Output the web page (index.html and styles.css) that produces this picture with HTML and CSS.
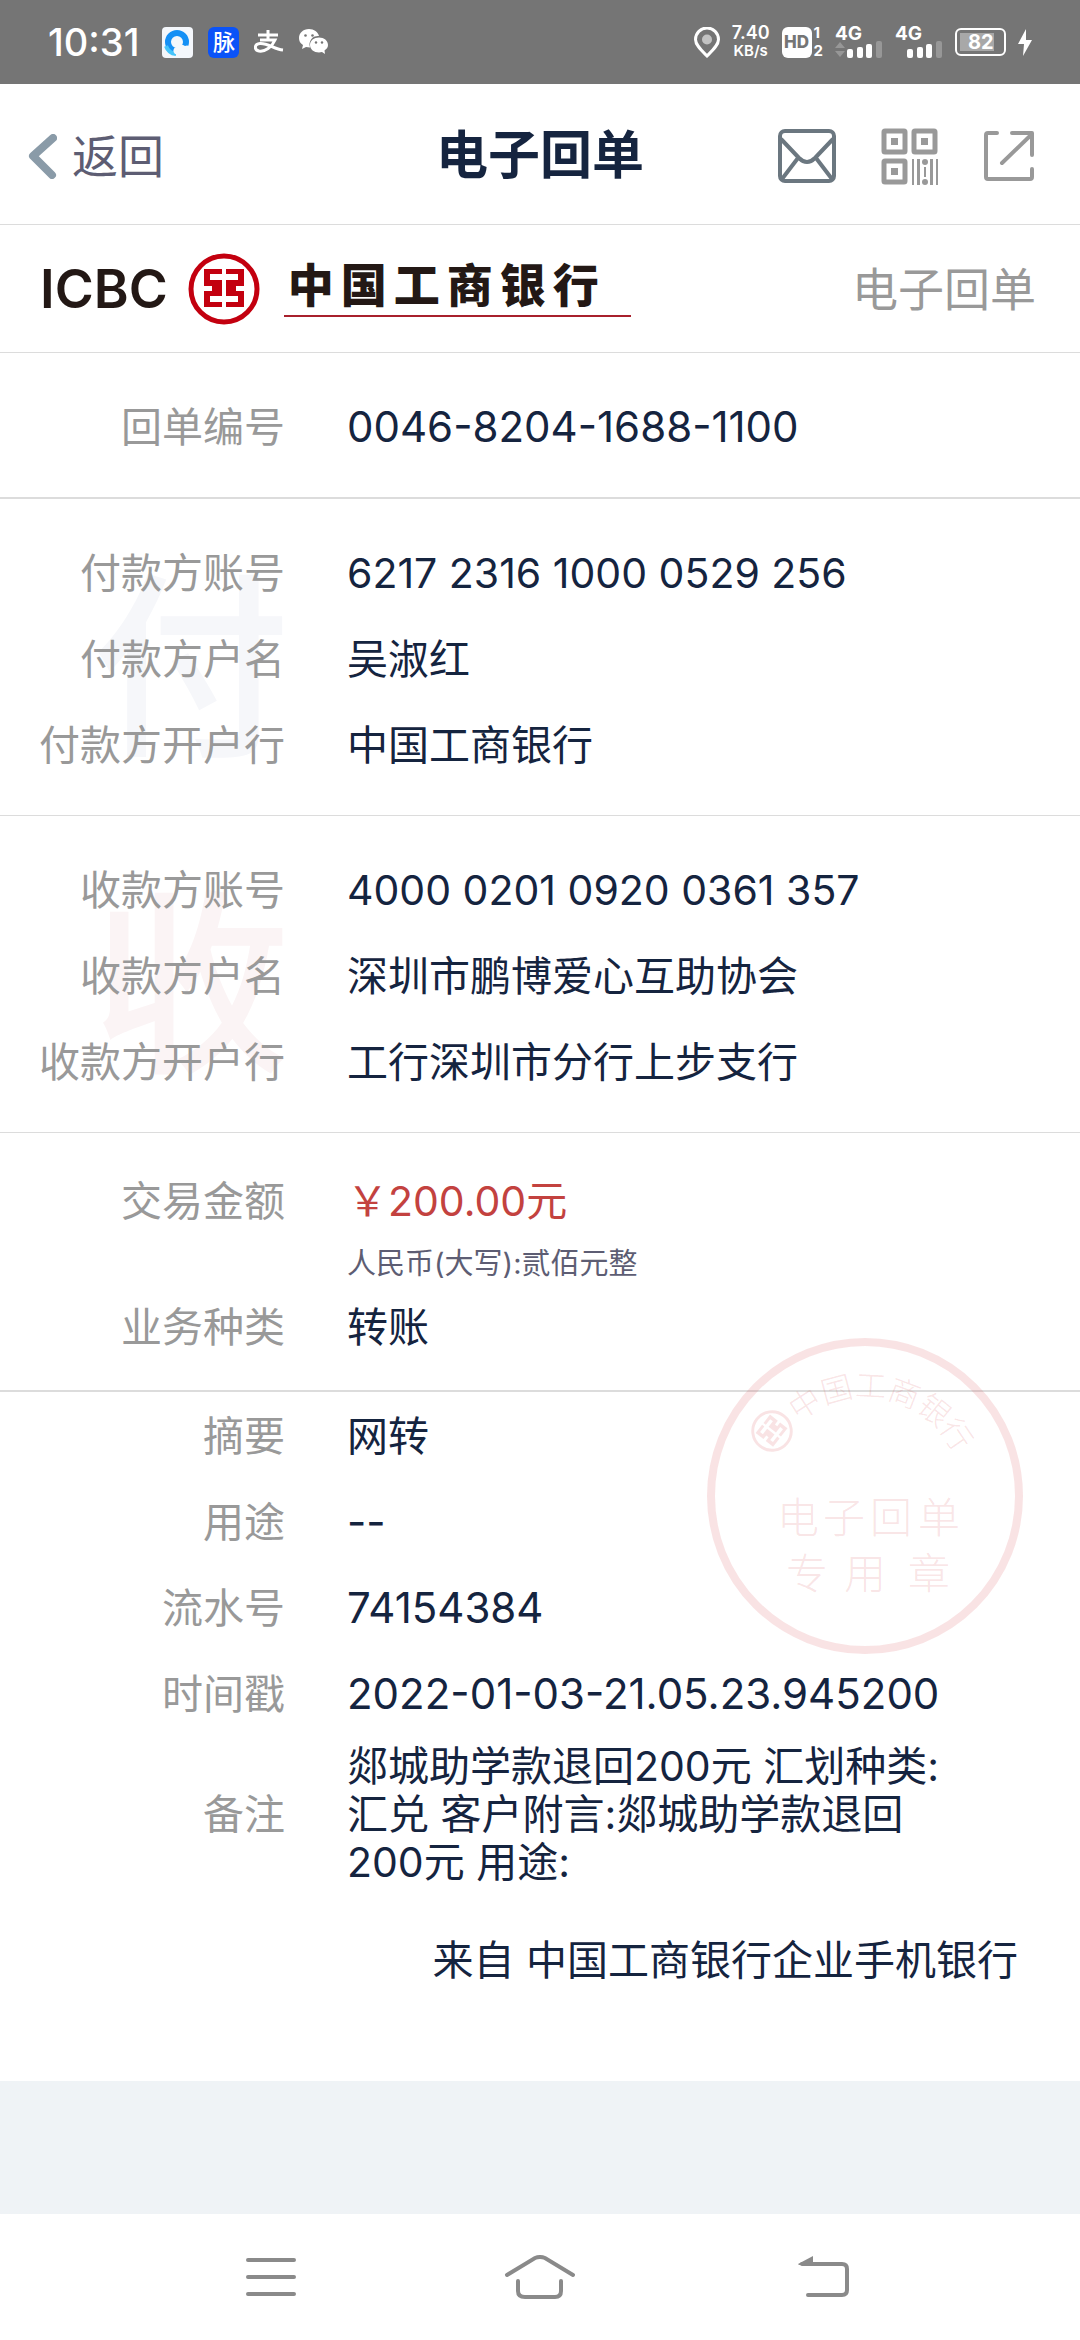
FILE: index.html
```html
<!DOCTYPE html>
<html lang="zh-CN">
<head>
<meta charset="utf-8">
<meta name="viewport" content="width=device-width, initial-scale=1">
<title>电子回单</title>
<link rel="stylesheet" href="styles.css">
</head>
<body>
<svg class="defs" aria-hidden="true">
  <symbol id="emblem" viewBox="0 0 72 72">
    <circle cx="36" cy="36" r="33" fill="none" stroke="currentColor" stroke-width="5"/>
    <path fill="currentColor" d="M16 16H34V21H22V27H34V43H22V49H34V54H16V38H24V33H16ZM56 16H38V21H50V27H38V43H50V49H38V54H56V38H48V33H56Z"/>
  </symbol>
</svg>

<div class="statusbar">
  <div class="status-left">
    <span class="clock">10:31</span>
    <svg width="31" height="31" viewBox="0 0 31 31"><rect width="31" height="31" rx="4" fill="#f4f7fb"/><circle cx="15" cy="15" r="9" fill="none" stroke="#1590f5" stroke-width="6"/><path d="M4 19a12 12 0 0 0 10 8" fill="none" stroke="#45c4fa" stroke-width="4"/><path d="M13 27a4 4 0 0 1 1-7 6 6 0 0 1 9-1 4 4 0 0 1 4 8Z" fill="#f4f7fb"/></svg>
    <span class="mai">脉</span>
    <svg width="30" height="24" viewBox="0 0 30 24" fill="none" stroke="#fff" stroke-width="3"><path d="M4 5H24M14 0V10M6 10H21C18 17 11 22 5 21C0 20 0 14 6 13.500C14 13 20 19 29 20"/></svg>
    <svg width="29" height="26" viewBox="0 0 29 26"><path fill="#fff" d="M10 0C4 0 0 4 0 9c0 3 1 5 4 7l-1 4 4-2 4 .5A8.500 8.500 0 0 1 20 7C19 3 15 0 10 0Z"/><path fill="#fff" d="M20 8.500c-5 0-9 3-9 7.500s4 7.500 9 7.500l3-.5 3 2-.5-3.500c2-1.500 3.500-3 3.500-5.500 0-4.500-4-7.500-9-7.500Z"/><g fill="#757575"><circle cx="6.500" cy="6.500" r="1.300"/><circle cx="13.500" cy="6.500" r="1.300"/><circle cx="17" cy="13.500" r="1.200"/><circle cx="23" cy="13.500" r="1.200"/></g></svg>
  </div>
  <div class="status-right">
    <svg width="26" height="31" viewBox="0 0 26 31"><path d="M13 29C7 23 1.500 18 1.500 12.500a11.500 11.500 0 0 1 23 0C24.500 18 19 23 13 29Z" fill="none" stroke="#fff" stroke-width="3"/><circle cx="13" cy="12.500" r="5" fill="#c3c3c3"/></svg>
    <span class="speed"><span class="speed-value">7.40</span><span class="speed-unit">KB/s</span></span>
    <span class="hd"><span class="hd-box">HD</span><span class="hd-sims"><span>1</span><span>2</span></span></span>
    <span class="signal"><span class="net">4G</span><svg width="48" height="17" viewBox="0 0 48 17"><g fill="#979797"><path d="M0 7 5 1l5 6ZM0 10l5 6 5-6Z"/><rect x="41" width="6" height="17" rx="2"/></g><g fill="#fff"><rect x="12" y="8" width="6" height="9" rx="2"/><rect x="22" y="6" width="6" height="11" rx="2"/><rect x="31" y="3" width="6" height="14" rx="2"/></g></svg></span>
    <span class="signal"><span class="net">4G</span><svg width="48" height="17" viewBox="0 0 48 17"><rect x="41" width="6" height="17" rx="2" fill="#979797"/><g fill="#fff"><rect x="12" y="8" width="6" height="9" rx="2"/><rect x="22" y="6" width="6" height="11" rx="2"/><rect x="31" y="3" width="6" height="14" rx="2"/></g></svg></span>
    <span class="battery"><span class="battery-level">82</span></span>
    <svg width="14" height="27" viewBox="0 0 14 27"><path d="M8 0 0 15H6L5 27 14 11H8Z" fill="#fff"/></svg>
  </div>
</div>

<header class="topbar">
  <a class="back" href="#"><svg width="29" height="45" viewBox="0 0 29 45"><path d="M25 4 5 22 24 41" fill="none" stroke="#8a9ba8" stroke-width="8" stroke-linecap="round" stroke-linejoin="round"/></svg>返回</a>
  <h1 class="title">电子回单</h1>
  <div class="actions">
    <button type="button" aria-label="邮件"><svg width="58" height="54" viewBox="0 0 58 54" fill="none" stroke="#6b7780" stroke-width="4"><rect x="2" y="2" width="54" height="50" rx="5"/><path d="M3 10 21 29Q29 37 37 29L55 10M20 29 4 50M38 29 54 50"/></svg></button>
    <button type="button" aria-label="二维码"><svg width="58" height="57" viewBox="0 0 58 57"><g fill="none" stroke="#999" stroke-width="5"><rect x="3" y="3" width="21" height="21" rx="1"/><rect x="33" y="3" width="21" height="21" rx="1"/><rect x="3" y="33" width="21" height="21" rx="1"/></g><g fill="#999"><path d="M10 10h7v7h-7ZM40 10h7v7h-7ZM10 40h7v7h-7ZM31 31h2v26h-2ZM36 31h3v26h-3ZM49 31h3v26h-3ZM55 31h2v26h-2ZM43 39h2v10h-2Z"/><circle cx="44" cy="34" r="3"/><circle cx="44" cy="54" r="3"/></g></svg></button>
    <button type="button" aria-label="分享"><svg width="50" height="50" viewBox="0 0 50 50" fill="none" stroke="#999" stroke-width="4" stroke-linecap="round" stroke-linejoin="round"><path d="M13 2H4Q2 2 2 4V46Q2 48 4 48H46Q48 48 48 46V38M28 2H48V24M48 3 18 32"/></svg></button>
  </div>
</header>

<main class="receipt">
  <div class="brand">
    <span class="icbc">ICBC</span>
    <svg class="brand-emblem" width="72" height="72"><use href="#emblem"/></svg>
    <span class="bank"><span>中</span><span>国</span><span>工</span><span>商</span><span>银</span><span>行</span></span>
    <span class="doc-type">电子回单</span>
  </div>

  <dl class="section number">
    <div class="row"><dt>回单编号</dt><dd class="code">0046-8204-1688-1100</dd></div>
  </dl>
  <dl class="section party payer" data-mark="付">
    <div class="row"><dt>付款方账号</dt><dd>6217 2316 1000 0529 256</dd></div>
    <div class="row"><dt>付款方户名</dt><dd>吴淑红</dd></div>
    <div class="row"><dt>付款方开户行</dt><dd>中国工商银行</dd></div>
  </dl>
  <dl class="section party payee" data-mark="收">
    <div class="row"><dt>收款方账号</dt><dd>4000 0201 0920 0361 357</dd></div>
    <div class="row"><dt>收款方户名</dt><dd>深圳市鹏博爱心互助协会</dd></div>
    <div class="row"><dt>收款方开户行</dt><dd>工行深圳市分行上步支行</dd></div>
  </dl>
  <dl class="section amount">
    <div class="row"><dt>交易金额</dt><dd class="money">￥200.00元</dd></div>
    <div class="row words"><dt></dt><dd>人民币(大写):贰佰元整</dd></div>
    <div class="row"><dt>业务种类</dt><dd>转账</dd></div>
  </dl>
  <dl class="section details">
    <div class="row"><dt>摘要</dt><dd>网转</dd></div>
    <div class="row"><dt>用途</dt><dd class="code">--</dd></div>
    <div class="row"><dt>流水号</dt><dd class="code">74154384</dd></div>
    <div class="row"><dt>时间戳</dt><dd class="code">2022-01-03-21.05.23.945200</dd></div>
    <div class="row remark"><dt>备注</dt><dd>郯城助学款退回200元 汇划种类:<br>汇兑 客户附言:郯城助学款退回<br>200元 用途:</dd></div>
  </dl>
  <svg class="stamp" width="320" height="320" viewBox="0 0 320 320">
    <circle cx="160" cy="160" r="154" fill="none" stroke="currentColor" stroke-width="8"/>
    <g transform="rotate(-52 67 95)"><use href="#emblem" x="46" y="74" width="42" height="42"/></g>
    <g class="stamp-arc">
      <text x="160" y="61" transform="rotate(-33 160 160)">中</text>
      <text x="160" y="61" transform="rotate(-15 160 160)">国</text>
      <text x="160" y="61" transform="rotate(3 160 160)">工</text>
      <text x="160" y="61" transform="rotate(21 160 160)">商</text>
      <text x="160" y="61" transform="rotate(39 160 160)">银</text>
      <text x="160" y="61" transform="rotate(56 160 160)">行</text>
    </g>
    <g class="stamp-lines">
      <text x="93" y="197">电</text><text x="139" y="197">子</text><text x="186" y="197">回</text><text x="234" y="197">单</text>
      <text x="102" y="253">专</text><text x="160" y="253">用</text><text x="224" y="253">章</text>
    </g>
  </svg>
  <p class="source">来自 中国工商银行企业手机银行</p>
</main>

<nav class="navbar">
  <button type="button" aria-label="菜单"><svg width="50" height="40" viewBox="0 0 50 40" stroke="#8a8a8a" stroke-width="4" stroke-linecap="round"><path d="M2 3H48M2 20H48M2 37H48"/></svg></button>
  <button type="button" aria-label="主页"><svg width="72" height="44" viewBox="0 0 72 44" fill="none" stroke="#8a8a8a" stroke-width="4" stroke-linecap="round"><path d="M3 20 31 3Q36 1 41 3L69 20M14 26V36Q14 42 21 42H51Q57 42 57 36V26"/></svg></button>
  <button type="button" aria-label="返回"><svg width="52" height="42" viewBox="0 0 52 42"><path d="M4 8H44Q49 8 49 13V34Q49 39 44 39H10" fill="none" stroke="#8a8a8a" stroke-width="4" stroke-linecap="round"/><path d="M0 8 15 0V9H1Z" fill="#8a8a8a"/></svg></button>
</nav>
</body>
</html>
```
FILE: styles.css
```css
* {
  box-sizing: border-box;
}

body {
  margin: 0;
  min-height: 100vh;
  display: flex;
  flex-direction: column;
  background: #eff3f6;
  color: #15243f;
  font-family: Inter, "Noto Sans CJK SC", sans-serif;
  font-size: 41px;
  line-height: 48px;
}

h1, dl, dd, p {
  margin: 0;
}

svg {
  display: block;
  flex: none;
}

button {
  padding: 0;
  border: 0;
  background: none;
}

.defs {
  position: absolute;
  width: 0;
  height: 0;
}

/* status bar */
.statusbar {
  display: flex;
  justify-content: space-between;
  align-items: center;
  height: 84px;
  padding: 0 48px;
  background: #757575;
  color: #fff;
}

.status-left {
  display: flex;
  align-items: center;
  gap: 15px;
}

.clock {
  margin-right: 8px;
  font-size: 38px;
  font-weight: 500;
}

.mai {
  width: 31px;
  height: 31px;
  border-radius: 6px;
  background: #0a53f8;
  font-size: 22px;
  font-weight: 500;
  line-height: 31px;
  text-align: center;
}

.status-right {
  display: flex;
  align-items: center;
  gap: 12px;
}

.speed {
  display: flex;
  flex-direction: column;
  align-items: center;
  font-weight: 600;
  line-height: 18px;
}

.speed-value {
  font-size: 18px;
}

.speed-unit {
  font-size: 15px;
}

.hd {
  display: flex;
  align-items: center;
  gap: 2px;
}

.hd-box {
  width: 30px;
  height: 31px;
  border-radius: 6px;
  background: #fff;
  color: #757575;
  font-size: 17px;
  font-weight: 800;
  line-height: 31px;
  text-align: center;
}

.hd-sims {
  display: flex;
  flex-direction: column;
  font-size: 15px;
  font-weight: 700;
  line-height: 18px;
}

.signal {
  display: flex;
  flex-direction: column;
}

.net {
  font-size: 19px;
  font-weight: 700;
  line-height: 14px;
}

.battery {
  display: flex;
  width: 51px;
  height: 28px;
  padding: 3px;
  border: 2px solid #fff;
  border-radius: 6px;
}

.battery-level {
  flex: 0 0 82%;
  background: #a8a8a8;
  font-size: 20px;
  font-weight: 700;
  line-height: 18px;
  text-align: right;
}

/* title bar */
.topbar {
  display: grid;
  grid-template-columns: 1fr auto 1fr;
  align-items: center;
  height: 141px;
  padding: 4px 28px 0;
  border-bottom: 1px solid #dcdcdc;
  background: #fff;
}

.back {
  display: flex;
  align-items: center;
  gap: 15px;
  color: #5d5d73;
  font-size: 46px;
  text-decoration: none;
}

.title {
  font-size: 52px;
  font-weight: 700;
}

.actions {
  display: flex;
  justify-content: flex-end;
  align-items: center;
  gap: 45px;
  padding-right: 18px;
}

/* receipt */
.receipt {
  position: relative;
  padding-bottom: 97px;
  background: #fff;
}

.brand {
  display: flex;
  align-items: center;
  height: 128px;
  padding: 0 44px 0 40px;
  border-bottom: 1px solid #dcdcdc;
}

.icbc {
  color: #231815;
  font-size: 53px;
  font-weight: 600;
}

.brand-emblem {
  margin: 0 24px 0 20px;
  color: #c3000f;
}

.bank {
  display: flex;
  gap: 7px;
  width: 347px;
  padding: 0 0 6px 4px;
  border-bottom: 2px solid #a8202c;
  color: #231815;
  font-size: 46px;
  font-weight: 900;
}

.doc-type {
  margin-left: auto;
  color: #999;
  font-size: 46px;
}

.section {
  position: relative;
  border-bottom: 1px solid #dcdcdc;
}

.number {
  padding: 31px 0 27px;
  border-bottom-width: 2px;
}

.party {
  padding: 31px 0 27px;
}

.party::before {
  content: attr(data-mark);
  position: absolute;
  left: 92px;
  top: 70px;
  font-size: 198px;
  font-weight: 500;
  line-height: 198px;
}

.payer::before {
  color: #f6f7fa;
}

.payee::before {
  color: #fbf4f5;
}

.amount {
  padding: 25px 0 20px;
  border-bottom-width: 2px;
}

.row {
  position: relative;
  display: flex;
  align-items: center;
  gap: 62px;
  min-height: 86px;
  padding-right: 60px;
}

dt {
  flex: 0 0 285px;
  color: #999;
  text-align: right;
}

dd {
  flex: 1;
}

.code {
  font-size: 42px;
}

.money {
  color: #c3423f;
}

.words {
  min-height: 40px;
  color: #5d5d73;
  font-size: 29px;
  line-height: 40px;
}

.details {
  padding-top: 1px;
  border-bottom: 0;
}

.remark {
  padding-top: 5px;
}

.source {
  margin-top: 50px;
  padding-right: 62px;
  text-align: right;
}

.stamp {
  position: absolute;
  right: 55px;
  bottom: 425px;
  color: rgba(214, 60, 66, 0.14);
}

.stamp text {
  fill: currentColor;
  font-family: "Noto Sans CJK SC", sans-serif;
  font-weight: 300;
  text-anchor: middle;
}

.stamp-arc {
  font-size: 31px;
}

.stamp-lines {
  font-size: 42px;
}

/* system navigation */
.navbar {
  display: grid;
  grid-template-columns: 1fr auto 1fr;
  align-items: center;
  height: 126px;
  margin-top: auto;
  padding: 0 230px;
  background: #fff;
}

.navbar button:first-child {
  justify-self: start;
  padding-left: 16px;
}

.navbar button:last-child {
  justify-self: end;
}
```
